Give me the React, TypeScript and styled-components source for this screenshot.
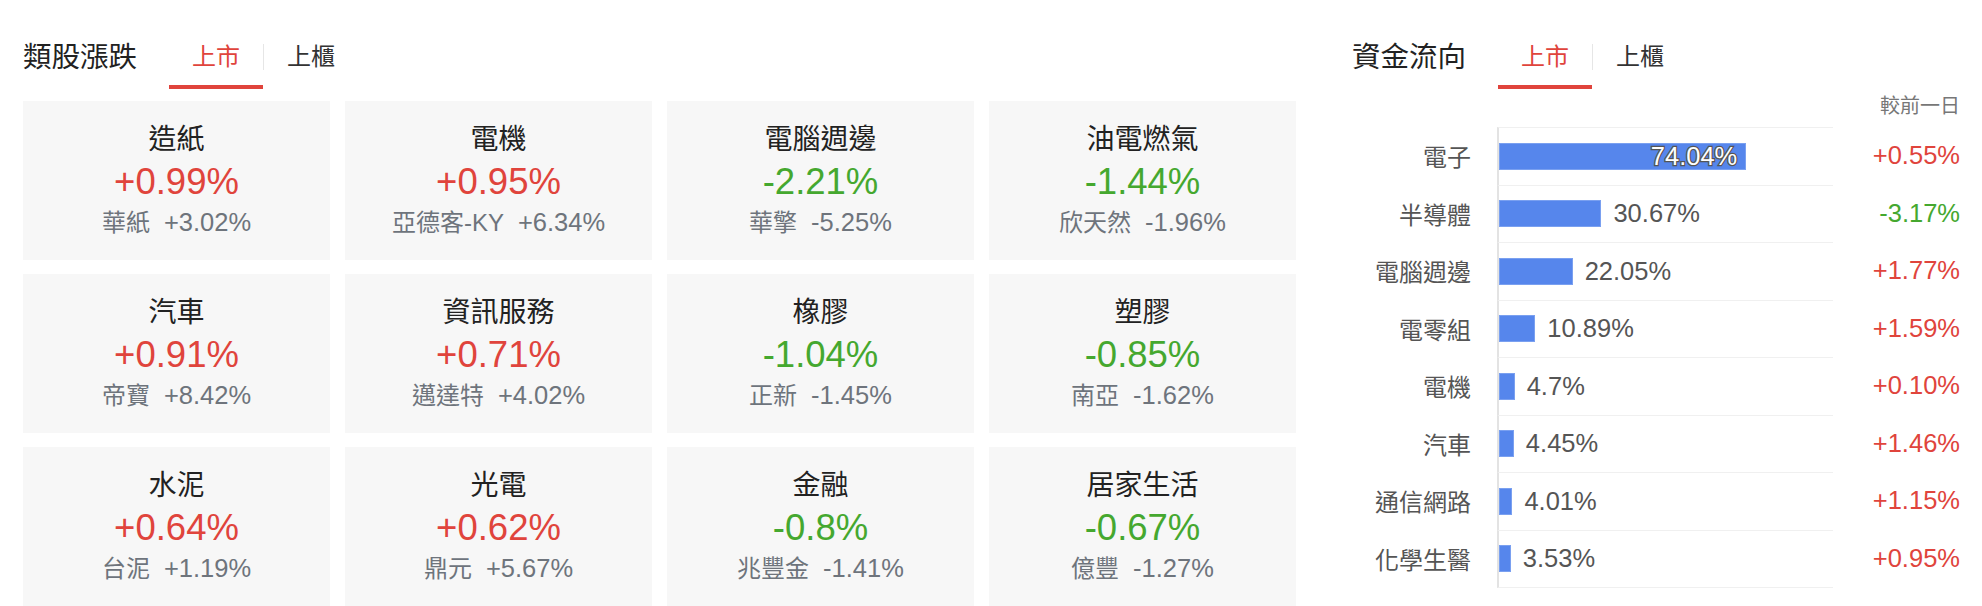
import React from 'react';
import styled, {createGlobalStyle} from "styled-components";

const RED = '#e0443c'
const GREEN = '#45a82f'

const GlobalStyle = createGlobalStyle`
  body {
    margin: 0;
    background: #fff;
    font-family: "Liberation Sans", "Noto Sans CJK TC", sans-serif;
  }
`

const Page = styled.div`
  display: flex;
  gap: 56px;
  padding: 0 22px 0 23px;
`

const LeftPanel = styled.div`
  width: 1273px;
  flex-shrink: 0;
`

const RightPanel = styled.div`
  flex: 1;
`

const Header = styled.div`
  display: flex;
  align-items: flex-end;
  padding-top: 37px;
`

const Title = styled.div`
  font-size: 28.5px;
  line-height: 40px;
  color: #222;
  padding-bottom: 12px;
  margin-right: 32px;
`

const Tab = styled.div<{ $active?: boolean }>`
  font-size: 24px;
  line-height: 40px;
  padding: 0 23px 8px;
  color: ${p => p.$active ? RED : '#333'};
  border-bottom: 4px solid ${p => p.$active ? RED : 'transparent'};
`

const Divider = styled.div`
  width: 1px;
  height: 26px;
  background: #e6e6e6;
  align-self: flex-start;
  margin-top: 7px;
`

const Grid = styled.div`
  display: grid;
  grid-template-columns: repeat(4, 1fr);
  column-gap: 15px;
  row-gap: 14px;
  margin-top: 12px;
`

const Card = styled.div`
  height: 159px;
  background: #f7f7f7;
  display: flex;
  flex-direction: column;
  align-items: center;
  justify-content: center;
`

const CardName = styled.div`
  font-size: 28px;
  line-height: 40px;
  color: #222;
`

const CardValue = styled.div<{ $up: boolean }>`
  font-size: 36.5px;
  line-height: 44px;
  color: ${p => p.$up ? RED : GREEN};
`

const CardSub = styled.div`
  font-size: 24px;
  line-height: 36px;
  color: #6e747c;
  display: flex;
  align-items: baseline;
  gap: 14px;
`

const SubPct = styled.span`
  font-size: 25.5px;
`

const Note = styled.div`
  text-align: right;
  font-size: 20px;
  line-height: 30px;
  color: #777;
  padding-top: 2px;
`

const Chart = styled.div`
  display: grid;
  grid-template-columns: 145px 336px 1fr;
  margin-top: 6px;
`

const Label = styled.div`
  font-size: 24px;
  color: #555;
  padding-right: 26px;
  display: flex;
  align-items: center;
  justify-content: flex-end;
`

const BarCell = styled.div<{ $last?: boolean }>`
  height: 56.5px;
  border-top: 1px solid #f0f0f0;
  border-bottom: ${p => p.$last ? '1px solid #f0f0f0' : 'none'};
  border-left: 2px solid #e3e3e3;
  display: flex;
  align-items: center;
`

const Bar = styled.div<{ $inside?: boolean }>`
  height: 27px;
  background: #5686ec;
  box-shadow: inset 0 0 0 1px #7aa0f0;
  display: flex;
  align-items: center;
  justify-content: flex-end;
  padding-right: ${p => p.$inside ? '9px' : '0'};
  box-sizing: border-box;
`

const BarText = styled.span<{ $inside?: boolean }>`
  font-size: 25.5px;
  line-height: 27px;
  color: ${p => p.$inside ? '#fff' : '#555'};
  margin-left: ${p => p.$inside ? '0' : '12px'};
  -webkit-text-stroke: ${p => p.$inside ? '2.5px #555' : '0'};
  paint-order: stroke fill;
`

const Value = styled.div<{ $up: boolean }>`
  font-size: 25.5px;
  color: ${p => p.$up ? RED : GREEN};
  display: flex;
  align-items: center;
  justify-content: flex-end;
`

const sectors = [
    {name: '造紙', pct: '+0.99%', stock: '華紙', stockPct: '+3.02%'},
    {name: '電機', pct: '+0.95%', stock: '亞德客-KY', stockPct: '+6.34%'},
    {name: '電腦週邊', pct: '-2.21%', stock: '華擎', stockPct: '-5.25%'},
    {name: '油電燃氣', pct: '-1.44%', stock: '欣天然', stockPct: '-1.96%'},
    {name: '汽車', pct: '+0.91%', stock: '帝寶', stockPct: '+8.42%'},
    {name: '資訊服務', pct: '+0.71%', stock: '邁達特', stockPct: '+4.02%'},
    {name: '橡膠', pct: '-1.04%', stock: '正新', stockPct: '-1.45%'},
    {name: '塑膠', pct: '-0.85%', stock: '南亞', stockPct: '-1.62%'},
    {name: '水泥', pct: '+0.64%', stock: '台泥', stockPct: '+1.19%'},
    {name: '光電', pct: '+0.62%', stock: '鼎元', stockPct: '+5.67%'},
    {name: '金融', pct: '-0.8%', stock: '兆豐金', stockPct: '-1.41%'},
    {name: '居家生活', pct: '-0.67%', stock: '億豐', stockPct: '-1.27%'},
]

const flows = [
    {name: '電子', share: 74.04, change: '+0.55%'},
    {name: '半導體', share: 30.67, change: '-3.17%'},
    {name: '電腦週邊', share: 22.05, change: '+1.77%'},
    {name: '電零組', share: 10.89, change: '+1.59%'},
    {name: '電機', share: 4.7, change: '+0.10%'},
    {name: '汽車', share: 4.45, change: '+1.46%'},
    {name: '通信網路', share: 4.01, change: '+1.15%'},
    {name: '化學生醫', share: 3.53, change: '+0.95%'},
]

const Tabs = () => (
    <>
        <Tab $active>上市</Tab>
        <Divider/>
        <Tab>上櫃</Tab>
    </>
)

const App = () => {
    return (
        <>
            <GlobalStyle/>
            <Page>
                <LeftPanel>
                    <Header>
                        <Title>類股漲跌</Title>
                        <Tabs/>
                    </Header>
                    <Grid>
                        {sectors.map(s =>
                            <Card key={s.name}>
                                <CardName>{s.name}</CardName>
                                <CardValue $up={!s.pct.startsWith('-')}>{s.pct}</CardValue>
                                <CardSub>
                                    <span>{s.stock}</span>
                                    <SubPct>{s.stockPct}</SubPct>
                                </CardSub>
                            </Card>
                        )}
                    </Grid>
                </LeftPanel>
                <RightPanel>
                    <Header>
                        <Title>資金流向</Title>
                        <Tabs/>
                    </Header>
                    <Note>較前一日</Note>
                    <Chart>
                        {flows.map((f, i) => {
                            const inside = f.share > 50
                            const last = i === flows.length - 1
                            return (
                                <React.Fragment key={f.name}>
                                    <Label>{f.name}</Label>
                                    <BarCell $last={last}>
                                        <Bar $inside={inside} style={{width: `${f.share * 3.34}px`}}>
                                            {inside && <BarText $inside>{f.share}%</BarText>}
                                        </Bar>
                                        {!inside && <BarText>{f.share}%</BarText>}
                                    </BarCell>
                                    <Value $up={!f.change.startsWith('-')}>{f.change}</Value>
                                </React.Fragment>
                            )
                        })}
                    </Chart>
                </RightPanel>
            </Page>
        </>
    );
};

export default App;
